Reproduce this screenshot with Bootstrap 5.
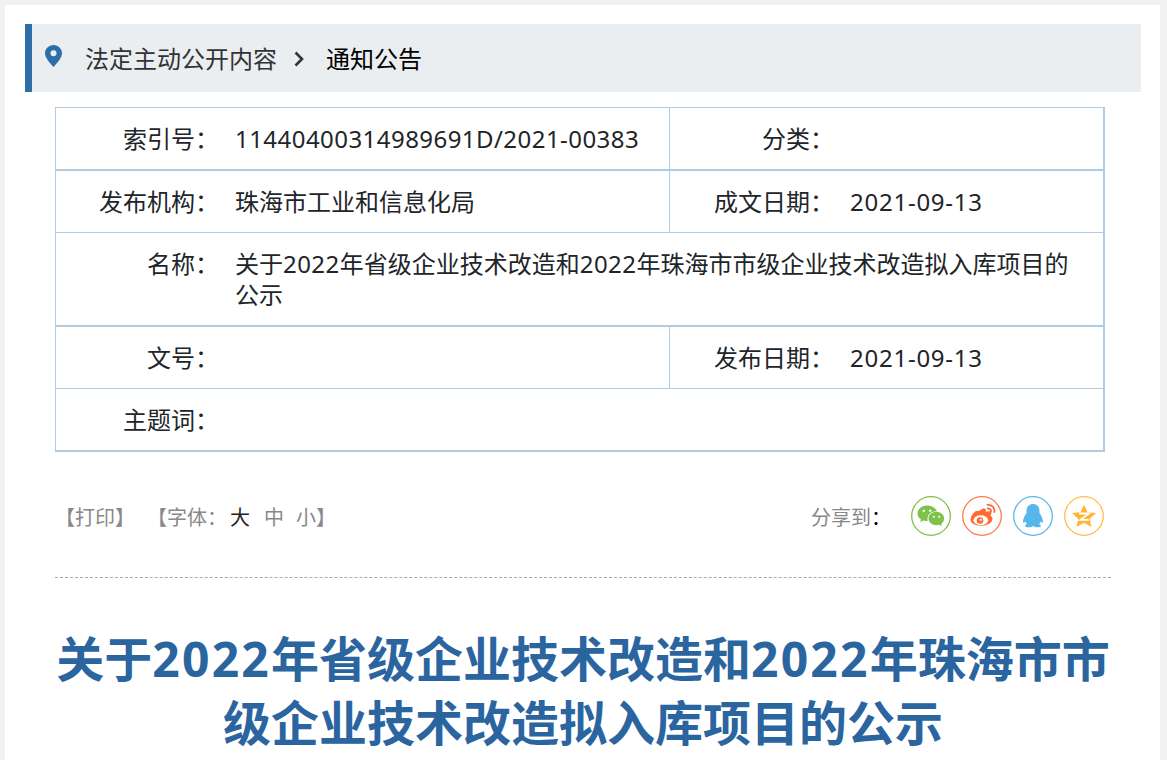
<!DOCTYPE html>
<html lang="zh-CN">
<head>
    <meta charset="UTF-8">
    <meta name="viewport" content="width=device-width, initial-scale=1.0">
    <title>关于2022年省级企业技术改造和2022年珠海市市级企业技术改造拟入库项目的公示</title>
    <link rel="stylesheet" href="https://cdn.jsdelivr.net/npm/bootstrap@5.3.3/dist/css/bootstrap.min.css">
    <style>
        body {
            background: #f1f1f1;
            font-family: "Noto Sans", "Noto Sans CJK SC", sans-serif;
            color: #000;
        }
        .page-panel {
            height: 755px;
            overflow: hidden;
            margin: 5px 7px 0 5px;
            padding: 19px 19px 0 20px;
            background: #fff;
        }
        .crumb-bar {
            height: 68px;
            padding: 2px 0 0 13px;
            background: #ebeef1;
            border-left: 7px solid #2e6ea6;
            font-size: 24px;
        }
        .crumb-pin { margin-right: 23px; margin-top: -6px; }
        .crumb-parent { color: #333; }
        .crumb-arrow { margin: 0 22px 0 17px; }
        .content-wrap { padding: 15px 30px 0; }
        .meta-table {
            table-layout: fixed;
            width: 1050px;
            margin: 0;
            font-size: 24px;
            line-height: 31px;
            border-collapse: separate;
            border-spacing: 0;
            border: 1px solid #b0cbe2;
            border-right-width: 2px;
            border-bottom-width: 2px;
        }
        .meta-table td {
            padding: 15px;
            border: 0;
            border-bottom: 1px solid #b0cbe2;
            vertical-align: top;
        }
        .meta-table tr:last-child td { border-bottom: 0; }
        .meta-table tr.thick td { border-bottom-width: 2px; }
        .meta-table td.cell-label { text-align: right; padding-right: 1px; }
        .meta-table .cell-split { border-left: 1px solid #b0cbe2; }
        .num-text { letter-spacing: .45px; }
        .date-text { letter-spacing: .75px; }
        .tool-row {
            height: 126px;
            padding-top: 3px;
            border-bottom: 1px dashed #aaa;
            font-size: 20px;
            color: #888;
        }
        .tool-text { margin-top: 4px; }
        .tool-group + .tool-group { margin-left: 12px; }
        .size-pick { margin-right: 14px; }
        .size-active { color: #222; margin-left: 3px; }
        .size-mid { margin-right: 12px; }
        .size-last { margin-right: 0; }
        .share-colon { color: #000; margin-right: 12px; }
        .share-list { gap: 11px; margin-right: 7px; }
        .share-btn { display: block; width: 40px; height: 40px; }
        .doc-heading {
            margin: 49px 0 0;
            font-size: 48px;
            font-weight: 700;
            line-height: 64px;
            color: #2b659f;
            text-align: center;
        }
        .doc-heading .num-text { letter-spacing: 2.2px; }
    </style>
</head>
<body>
    <div class="page-panel">
        <div class="crumb-bar d-flex align-items-center">
            <svg class="crumb-pin" width="17" height="22" viewBox="0 0 17 22">
                <path fill="#2e6ea6" fill-rule="evenodd" d="M8.500 0C3.800 0 0 3.700 0 8.200 0 13 5.500 18.500 8.500 22 11.500 18.500 17 13 17 8.200 17 3.700 13.200 0 8.500 0zM8.500 5.200a3 3 0 1 1 0 6 3 3 0 0 1 0-6z"/>
            </svg>
            <span class="crumb-parent">法定主动公开内容</span>
            <svg class="crumb-arrow" width="10" height="16" viewBox="0 0 10 16">
                <path fill="none" stroke="#333" stroke-width="2.600" d="M1.500 1.500 8 8l-6.500 6.500"/>
            </svg>
            <span>通知公告</span>
        </div>

        <div class="content-wrap">
            <table class="table meta-table">
                <colgroup>
                    <col style="width: 164px">
                    <col style="width: 449px">
                    <col style="width: 166px">
                    <col>
                </colgroup>
                <tr class="thick">
                    <td class="cell-label">索引号：</td>
                    <td><span class="num-text">11440400314989691D/2021-00383</span></td>
                    <td class="cell-label cell-split">分类：</td>
                    <td></td>
                </tr>
                <tr>
                    <td class="cell-label">发布机构：</td>
                    <td>珠海市工业和信息化局</td>
                    <td class="cell-label cell-split">成文日期：</td>
                    <td><span class="date-text">2021-09-13</span></td>
                </tr>
                <tr class="thick">
                    <td class="cell-label">名称：</td>
                    <td colspan="3">关于<span class="num-text">2022</span>年省级企业技术改造和<span class="num-text">2022</span>年珠海市市级企业技术改造拟入库项目的<br>公示</td>
                </tr>
                <tr>
                    <td class="cell-label">文号：</td>
                    <td></td>
                    <td class="cell-label cell-split">发布日期：</td>
                    <td><span class="date-text">2021-09-13</span></td>
                </tr>
                <tr>
                    <td class="cell-label">主题词：</td>
                    <td colspan="3"></td>
                </tr>
            </table>

            <div class="tool-row d-flex align-items-center justify-content-between">
                <div class="tool-text d-flex">
                    <span class="tool-group">【打印】</span>
                    <span class="tool-group">【字体：<span class="size-pick size-active">大</span><span class="size-pick size-mid">中</span><span class="size-pick size-last">小</span>】</span>
                </div>
                <div class="d-flex align-items-center gap-2">
                    <span class="tool-text">分享到<span class="share-colon">：</span></span>
                    <div class="d-flex share-list">
                        <svg class="share-btn" viewBox="0 0 40 40">
                            <circle cx="20" cy="20" r="19.300" fill="#fff" stroke="#7dc24b" stroke-width="1.300"/>
                            <path fill="#7dc24b" d="M16 9.500c-5.300 0-9.500 3.500-9.500 7.900 0 2.500 1.400 4.600 3.500 6l-.9 2.800 3.300-1.700c1.100.3 2.300.5 3.500.5.300 0 .6 0 .9 0-.2-.8-.3-1.500-.3-2.200 0-4.200 3.900-7.500 8.800-7.500.2 0 .5 0 .7 0C24.900 12 20.800 9.500 16 9.500z"/>
                            <path fill="#7dc24b" d="M25.500 15.800c-4.400 0-8 3-8 6.700s3.600 6.700 8 6.700c.9 0 1.800-.1 2.700-.4l2.700 1.400-.7-2.300c1.800-1.200 3-3.200 3-5.400 0-3.700-3.500-6.700-7.700-6.700z"/>
                            <g fill="#fff">
                                <circle cx="12.800" cy="14.800" r="1.200"/>
                                <circle cx="19.200" cy="14.800" r="1.200"/>
                                <circle cx="22.800" cy="20.800" r="1"/>
                                <circle cx="28.200" cy="20.800" r="1"/>
                            </g>
                        </svg>
                        <svg class="share-btn" viewBox="0 0 40 40">
                            <circle cx="20" cy="20" r="19.300" fill="#fff" stroke="#ff7a4d" stroke-width="1.300"/>
                            <path fill="#ff6a33" d="M17 15c2.500-2.300 5.300-3.300 6.500-2.100.6.600.6 1.600.2 2.800 2.600-.8 4.900-.7 5.500 1 .4 1-.1 2.100-1 3 1.600.6 2.300 1.700 2.300 3 0 3.700-5.100 7-11.500 7-5.700 0-10.500-2.300-10.500-6.200 0-2.500 2-5.500 4-7.500 1.500-1.500 3-.8 4.500-1z"/>
                            <ellipse cx="18.800" cy="24.200" rx="7.300" ry="5" fill="#fff"/>
                            <circle cx="18" cy="24.500" r="3.300" fill="#ff6a33"/>
                            <circle cx="18.800" cy="23.800" r="1.100" fill="#fff"/>
                            <path fill="none" stroke="#ff6a33" stroke-width="1.800" stroke-linecap="round" d="M25.500 8.800c4.300-.3 7.500 3 6.800 7.400M25.800 12.500c2.100-.2 3.500 1.400 3.100 3.400"/>
                        </svg>
                        <svg class="share-btn" viewBox="0 0 40 40">
                            <circle cx="20" cy="20" r="19.300" fill="#fff" stroke="#5bb8ea" stroke-width="1.300"/>
                            <path fill="#57b6ea" d="M20 8c-4 0-6.500 3-6.500 7v2.200c-1.800 2.300-3.500 5.500-3.500 8.300 0 1.400.8 1.700 2.400 0 .3 1 .9 1.900 1.600 2.600-1.300.6-2 1.200-2 1.900 0 1 2.500 1.500 4.500 1.300 1.300-.1 2.400-.6 2.800-1.100h1.400c.4.500 1.500 1 2.800 1.100 2 .2 4.500-.3 4.500-1.300 0-.7-.7-1.300-2-1.900.7-.7 1.300-1.600 1.600-2.600 1.600 1.700 2.400 1.400 2.400 0 0-2.800-1.700-6-3.500-8.300V15c0-4-2.500-7-6.500-7z"/>
                        </svg>
                        <svg class="share-btn" viewBox="0 0 40 40">
                            <circle cx="20" cy="20" r="19.300" fill="#fff" stroke="#ffbf4d" stroke-width="1.300"/>
                            <path fill="#ffb433" d="M20 8.500l3.500 7.800 8.500.8-6.300 5.600 1.800 8.300L20 26.700 12.500 31l1.800-8.300L8 17.100l8.500-.8z"/>
                            <path fill="none" stroke="#fff" stroke-width="1.800" d="M15 17.500h10l-8.500 6.300H25"/>
                        </svg>
                    </div>
                </div>
            </div>

            <h1 class="doc-heading">关于<span class="num-text">2022</span>年省级企业技术改造和<span class="num-text">2022</span>年珠海市市<br>级企业技术改造拟入库项目的公示</h1>
        </div>
    </div>
    <script src="https://cdn.jsdelivr.net/npm/bootstrap@5.3.3/dist/js/bootstrap.bundle.min.js"></script>
</body>
</html>
